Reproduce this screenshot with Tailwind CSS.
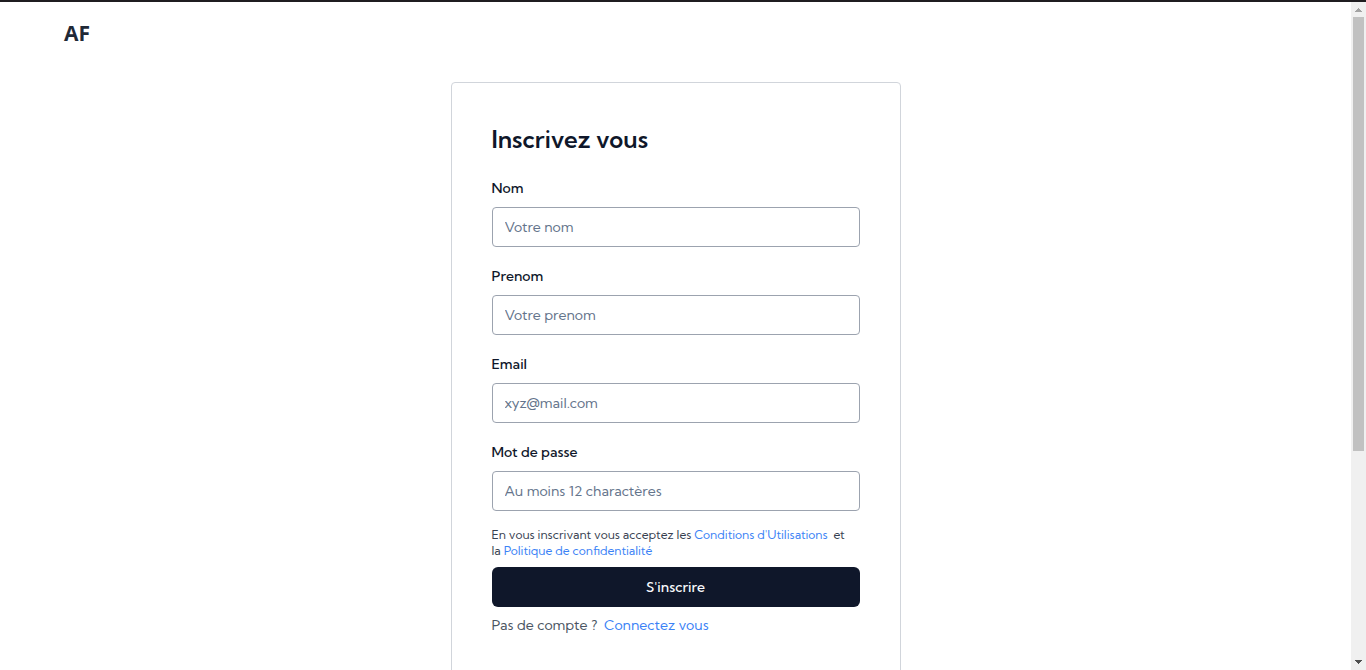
<!DOCTYPE html>
<html lang="fr">
<head>
<meta charset="utf-8">
<meta name="viewport" content="width=device-width, initial-scale=1">
<title>Inscription</title>
<script src="https://cdn.jsdelivr.net/npm/@tailwindcss/browser@4"></script>
</head>
<body class="flex h-screen flex-col overflow-hidden border-t-2 border-[#1f1d20] bg-white font-['Kumbh_Sans','Lato',sans-serif] text-[#0f172a]">
<div class="flex min-h-0 flex-1">
  <div class="min-w-0 flex-1 overflow-hidden">
    <header class="flex h-16 items-center px-16">
      <a href="#" class="font-['Open_Sans',sans-serif] text-[21px] font-bold text-[#1f2937]">AF</a>
    </header>
    <main class="flex justify-center px-4 pt-4">
      <form class="w-full max-w-[450px] rounded border border-[#d1d5db] px-10 pt-10 pb-40">
        <h1 class="mb-[26px] text-2xl leading-8 font-semibold">Inscrivez vous</h1>
        <div class="mb-[22px]">
          <label for="nom" class="mb-3 block text-sm leading-none font-medium">Nom</label>
          <input id="nom" type="text" placeholder="Votre nom" class="block h-10 w-full rounded border border-[#9ca3af] bg-transparent px-3 text-sm placeholder:text-[#64748b]">
        </div>
        <div class="mb-[22px]">
          <label for="prenom" class="mb-3 block text-sm leading-none font-medium">Prenom</label>
          <input id="prenom" type="text" placeholder="Votre prenom" class="block h-10 w-full rounded border border-[#9ca3af] bg-transparent px-3 text-sm placeholder:text-[#64748b]">
        </div>
        <div class="mb-[22px]">
          <label for="email" class="mb-3 block text-sm leading-none font-medium">Email</label>
          <input id="email" type="email" placeholder="xyz@mail.com" class="block h-10 w-full rounded border border-[#9ca3af] bg-transparent px-3 text-sm placeholder:text-[#64748b]">
        </div>
        <div class="mb-4">
          <label for="passe" class="mb-3 block text-sm leading-none font-medium">Mot de passe</label>
          <input id="passe" type="password" placeholder="Au moins 12 charactères" class="block h-10 w-full rounded border border-[#9ca3af] bg-transparent px-3 text-sm placeholder:text-[#64748b]">
        </div>
        <p class="mb-2 text-xs leading-4 text-[#374151]">En vous inscrivant vous acceptez les <a href="#" class="text-[#3b82f6]">Conditions d'Utilisations</a>&nbsp; et<br>la <a href="#" class="text-[#3b82f6]">Politique de confidentialité</a></p>
        <button type="submit" class="block h-10 w-full rounded-md bg-[#0f172a] text-sm font-medium text-[#f8fafc]">S'inscrire</button>
        <p class="mt-2 text-sm leading-5 text-[#4b5563]">Pas de compte ?&nbsp; <a href="#" class="text-[#3b82f6]">Connectez vous</a></p>
      </form>
    </main>
  </div>
  <div class="flex w-[15px] flex-col items-center bg-[#f0f0f0]" aria-hidden="true">
    <svg class="h-[15px] w-[15px] shrink-0" viewBox="0 0 15 15" shape-rendering="crispEdges" fill="#a3a3a3"><path d="M7 6h1v1h1v1h1v1h1v1H4V9h1V8h1V7h1z"/></svg>
    <div class="h-[65%] w-[11px] bg-[#c1c1c1]"></div>
    <svg class="mt-auto h-[15px] w-[15px] shrink-0" viewBox="0 0 15 15" shape-rendering="crispEdges" fill="#505050"><path d="M4 5h7v1h-1v1H9v1H8v1H7V8H6V7H5V6H4z"/></svg>
  </div>
</div>
</body>
</html>
